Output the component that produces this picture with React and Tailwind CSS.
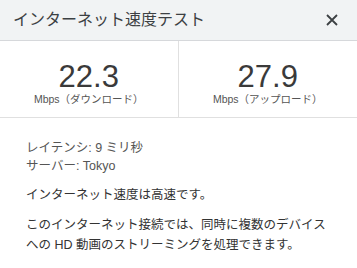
export default function App() {
  return (
    <div
      className="h-[268px] w-[357px] overflow-hidden bg-white text-[#333]"
      style={{ fontFamily: '"Liberation Sans", "Noto Sans CJK JP", sans-serif' }}
    >
      <header className="flex h-[41px] items-center justify-between border-b border-[#d6d8db] bg-[#f1f3f4] pl-[13px] pr-[19px]">
        <h1 className="text-[16px] leading-none text-[#3c4043]">インターネット速度テスト</h1>
        <button className="text-[#3c4043]" aria-label="閉じる">
          <svg width="12" height="12" viewBox="0 0 12 12" fill="none" stroke="currentColor" strokeWidth="1.8">
            <path d="M1 1l10 10M11 1L1 11" />
          </svg>
        </button>
      </header>

      <div className="grid grid-cols-2 border-b border-[#e0e0e0]">
        <div className="flex flex-col items-center border-r border-[#e0e0e0] pb-[12px] pt-[20px]">
          <span className="text-[31px] leading-none text-[#3a3a3a]">22.3</span>
          <span className="mt-[1px] text-[10.5px] leading-[12px] text-[#555]">Mbps（ダウンロード）</span>
        </div>
        <div className="flex flex-col items-center pb-[12px] pt-[20px]">
          <span className="text-[31px] leading-none text-[#3a3a3a]">27.9</span>
          <span className="mt-[1px] text-[10.5px] leading-[12px] text-[#555]">Mbps（アップロード）</span>
        </div>
      </div>

      <div className="px-[26px] pt-[21px] text-[12.5px]">
        <div className="leading-[18px] text-[#555]">
          <p>レイテンシ: 9 ミリ秒</p>
          <p>サーバー: Tokyo</p>
        </div>
        <p className="mt-[10px] leading-[20px] text-[#333]">インターネット速度は高速です。</p>
        <p className="mt-[10px] leading-[20px] text-[#333]">
          このインターネット接続では、同時に複数のデバイスへの HD 動画のストリーミングを処理できます。
        </p>
      </div>
    </div>
  );
}
